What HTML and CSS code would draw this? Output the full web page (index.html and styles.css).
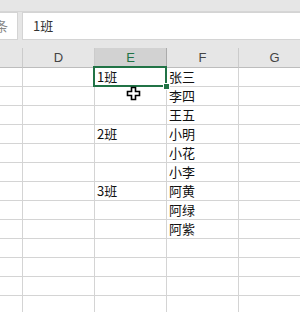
FILE: index.html
```html
<!DOCTYPE html>
<html lang="zh-CN">
<head>
    <meta charset="UTF-8">
    <title>Sheet</title>
    <link rel="stylesheet" href="styles.css">
</head>
<body>
    <div class="app">
        <div class="ribbon-edge"></div>

        <div class="formula-row">
            <div class="name-box"><span class="name-glyph">条</span></div>
            <div class="formula-box">1班</div>
        </div>

        <div class="sheet">
            <div class="col-head"></div>
            <div class="col-head">D</div>
            <div class="col-head active">E</div>
            <div class="col-head">F</div>
            <div class="col-head">G</div>

            <div class="cell"></div><div class="cell"></div><div class="cell">1班</div><div class="cell">张三</div><div class="cell"></div>
            <div class="cell"></div><div class="cell"></div><div class="cell"></div><div class="cell">李四</div><div class="cell"></div>
            <div class="cell"></div><div class="cell"></div><div class="cell"></div><div class="cell">王五</div><div class="cell"></div>
            <div class="cell"></div><div class="cell"></div><div class="cell">2班</div><div class="cell">小明</div><div class="cell"></div>
            <div class="cell"></div><div class="cell"></div><div class="cell"></div><div class="cell">小花</div><div class="cell"></div>
            <div class="cell"></div><div class="cell"></div><div class="cell"></div><div class="cell">小李</div><div class="cell"></div>
            <div class="cell"></div><div class="cell"></div><div class="cell">3班</div><div class="cell">阿黄</div><div class="cell"></div>
            <div class="cell"></div><div class="cell"></div><div class="cell"></div><div class="cell">阿绿</div><div class="cell"></div>
            <div class="cell"></div><div class="cell"></div><div class="cell"></div><div class="cell">阿紫</div><div class="cell"></div>
            <div class="cell"></div><div class="cell"></div><div class="cell"></div><div class="cell"></div><div class="cell"></div>
            <div class="cell"></div><div class="cell"></div><div class="cell"></div><div class="cell"></div><div class="cell"></div>
            <div class="cell"></div><div class="cell"></div><div class="cell"></div><div class="cell"></div><div class="cell"></div>
            <div class="cell"></div><div class="cell"></div><div class="cell"></div><div class="cell"></div><div class="cell"></div>

            <!-- active cell E1 -->
            <div class="selection"><span class="fill-handle"></span></div>

            <svg class="cursor" width="15" height="15" viewBox="0 0 15 15">
                <path d="M5.5 1.5h4v4h4v4h-4v4h-4v-4h-4v-4h4z" fill="#fff" stroke="#000" stroke-width="1.6" stroke-linejoin="miter"/>
            </svg>
        </div>
    </div>
</body>
</html>
```

FILE: styles.css
```css
body {
    margin: 0;
    padding: 0;
    background-color: #fff;
    font-family: "Noto Sans CJK SC", "Liberation Sans", sans-serif;
    overflow: hidden;
}

.app {
    width: 300px;
    height: 312px;
    overflow: hidden;
    background: #fff;
}

.ribbon-edge {
    height: 11px;
    background: #e6e6e6;
    border-bottom: 1px solid #d6d6d6;
}

.formula-row {
    display: flex;
    gap: 4px;
    height: 28px;
    padding-bottom: 8px;
    background: #e6e6e6;
}

.name-box,
.formula-box {
    background: #fff;
    border: 1px solid #d4d4d4;
    box-sizing: border-box;
    height: 28px;
    overflow: hidden;
}

.name-box {
    width: 18px;
    border-left: none;
    display: flex;
    justify-content: flex-end;
}

.name-glyph {
    margin-right: 9px;
    font-size: 13px;
    line-height: 26px;
    color: #888;
}

.formula-box {
    flex: 1;
    margin-right: -2px;
    padding-left: 10px;
    font-size: 13px;
    line-height: 26px;
    color: #333;
}

.sheet {
    position: relative;
    display: grid;
    grid-template-columns: 23px 72px 72px 72px 72px;
    grid-auto-rows: 19px;
    grid-template-rows: 20px;
}

.col-head {
    background: #e6e6e6;
    border-right: 1px solid #cbcbcb;
    border-bottom: 1px solid #bdbdbd;
    font-family: "Liberation Sans", sans-serif;
    font-size: 13px;
    color: #444;
    text-align: center;
    line-height: 19px;
    overflow: hidden;
}

.col-head.active {
    background: #d2d2d2;
    border-right-color: #ababab;
    color: #217346;
}

.cell {
    border-right: 1px solid #d4d4d4;
    border-bottom: 1px solid #d4d4d4;
    font-size: 13px;
    line-height: 18px;
    padding-left: 2px;
    color: #111;
    white-space: nowrap;
    overflow: hidden;
}

.selection {
    position: absolute;
    left: 93px;
    top: 18px;
    width: 70px;
    height: 17px;
    border: 2px solid #217346;
}

.fill-handle {
    position: absolute;
    right: -5px;
    bottom: -5px;
    width: 5px;
    height: 5px;
    background: #217346;
    border: 1px solid #fff;
}

.cursor {
    position: absolute;
    left: 126px;
    top: 38px;
}
```
